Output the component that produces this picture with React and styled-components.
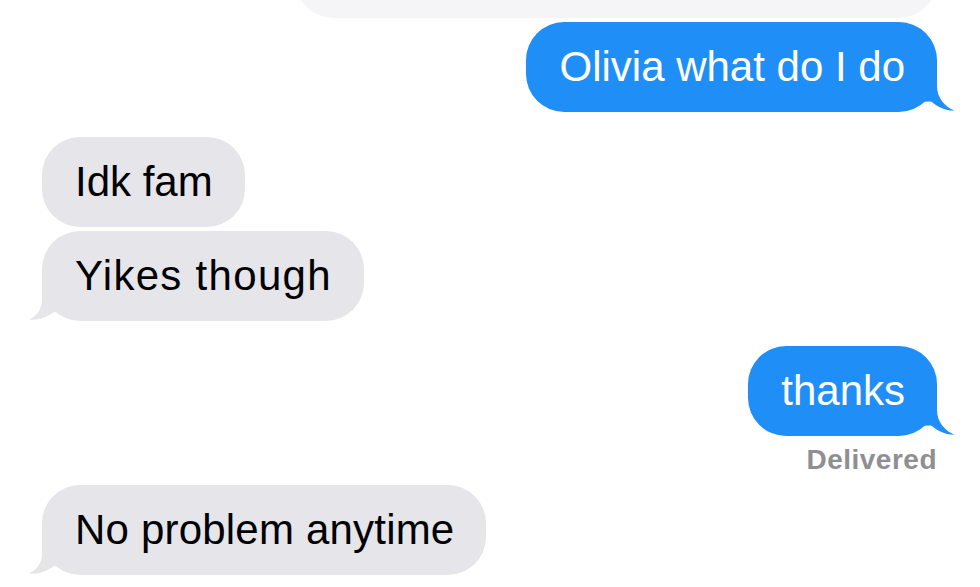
import React from 'react';
import styled, { createGlobalStyle } from 'styled-components';

const GlobalStyle = createGlobalStyle`
  html, body {
    margin: 0;
    padding: 0;
    background: #ffffff;
  }
  body {
    font-family: "Liberation Sans", Arial, sans-serif;
    overflow: hidden;
  }
`

const BLUE = '#1f8ff7';
const GRAY = '#e5e5ea';

const Thread = styled.div`
  width: 980px;
  height: 587px;
  display: flex;
  flex-direction: column;
  box-sizing: border-box;
  padding: 0 43px 0 42px;
  overflow: hidden;
  background: #ffffff;
`

const Row = styled.div`
  display: flex;
  justify-content: ${({ $side }) => ($side === 'sent' ? 'flex-end' : 'flex-start')};
  margin-top: ${({ $gap }) => $gap}px;
`

const Bubble = styled.div`
  position: relative;
  height: 90px;
  box-sizing: border-box;
  padding: 0 32px 0 33px;
  display: flex;
  align-items: center;
  border-radius: 38px;
  font-size: 42px;
  line-height: 42px;
  white-space: nowrap;
  letter-spacing: ${({ $spacing }) => $spacing || 0}px;
  background: ${({ $side }) => ($side === 'sent' ? BLUE : GRAY)};
  color: ${({ $side }) => ($side === 'sent' ? '#ffffff' : '#000000')};
`

const PeekBubble = styled.div`
  width: 642px;
  height: 90px;
  margin-top: -72px;
  border-radius: 38px;
  background: #f5f5f7;
`

const Tail = styled.svg`
  position: absolute;
  bottom: 0;
  width: ${({ $side }) => ($side === 'sent' ? 48 : 44)}px;
  height: 40px;
  ${({ $side }) => ($side === 'sent' ? 'right: -18px;' : 'left: -14px;')}
`

const Status = styled.div`
  display: flex;
  justify-content: flex-end;
  margin-top: 9px;
  height: 30px;
  font-size: 28px;
  line-height: 30px;
  font-weight: 700;
  letter-spacing: 0.5px;
  color: #8e8e93;
`

const BubbleTail = ({ side }) => {
  if (side === 'sent') {
    return (
      <Tail $side="sent" viewBox="0 0 48 40">
        <path
          d="M30 0 L30 14 C30 26 38 35 47.5 38.5 C40 39 32 36 24 29.5 L0 30 L0 0 Z"
          fill={BLUE}
        />
      </Tail>
    );
  }
  return (
    <Tail $side="received" viewBox="0 0 44 40">
      <path
        d="M14 0 L14 18 C14 28 9 35 1 38.5 C9 39.5 18 37 26 31 L44 31 L44 0 Z"
        fill={GRAY}
      />
    </Tail>
  );
}

const Message = ({ side, gap, tail, spacing, children }) => (
  <Row $side={side} $gap={gap}>
    <Bubble $side={side} $spacing={spacing}>
      {tail && <BubbleTail side={side} />}
      {children}
    </Bubble>
  </Row>
)

const messages = [
  { side: 'sent', gap: 4, tail: true, text: 'Olivia what do I do' },
  { side: 'received', gap: 25, tail: false, text: 'Idk fam' },
  { side: 'received', gap: 4, tail: true, text: 'Yikes though', spacing: 1.3 },
  { side: 'sent', gap: 25, tail: true, text: 'thanks' },
];

export default function App() {
  return (
    <>
      <GlobalStyle />
      <Thread>
        <Row $side="sent" $gap={0}>
          <PeekBubble />
        </Row>
        {messages.map((m) => (
          <Message key={m.text} side={m.side} gap={m.gap} tail={m.tail} spacing={m.spacing}>
            {m.text}
          </Message>
        ))}
        <Status>Delivered</Status>
        <Message side="received" gap={10} tail spacing={0.2}>
          No problem anytime
        </Message>
      </Thread>
    </>
  );
}
